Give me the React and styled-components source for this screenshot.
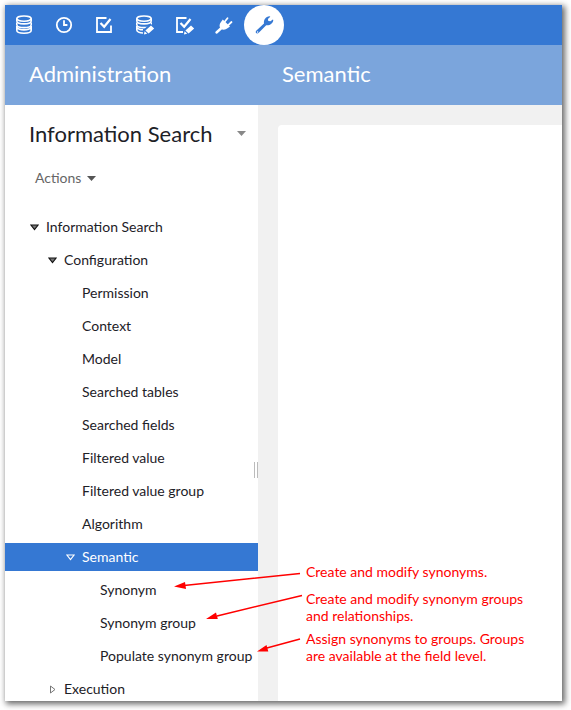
import React from "react";
import styled, { createGlobalStyle } from "styled-components";

const GlobalStyle = createGlobalStyle`
  * { box-sizing: border-box; }
  body { margin: 0; background: #fff; font-family: Lato, "Open Sans", sans-serif; color: #1d2127; }
  button { font: inherit; color: inherit; border: 0; background: none; padding: 0; cursor: pointer; }
`;

const Page = styled.div`
  height: 100vh;
  padding: 5px 9px 9px 5px;
`;

const Window = styled.div`
  position: relative;
  display: flex;
  flex-direction: column;
  height: 100%;
  background: #fff;
  box-shadow: 2px 2px 6px 1px rgba(0, 0, 0, 0.6);
`;

const Toolbar = styled.nav`
  display: flex;
  flex: none;
  gap: 10px;
  height: 40px;
  padding-left: 9px;
  background: #3578d3;
`;

const ToolButton = styled.button`
  display: flex;
  align-items: center;
  justify-content: center;
  width: ${(p) => (p.$active ? 40 : 20)}px;
  min-width: ${(p) => (p.$active ? 40 : 20)}px;
  height: 40px;
  border-radius: 50%;
  && {
    color: ${(p) => (p.$active ? "#3578d3" : "#fff")};
    background: ${(p) => (p.$active ? "#fff" : "transparent")};
  }
`;

const ToolGroup = styled.div`
  display: flex;
  gap: 20px;
`;

const Columns = styled.div`
  display: grid;
  grid-template-columns: 253px 1fr;
  flex: ${(p) => (p.$fill ? "1" : "none")};
  min-height: 0;
  overflow: hidden;
`;

const Banner = styled.h1`
  margin: 0;
  padding: 0 24px 2px;
  height: 60px;
  line-height: 58px;
  font-size: 22px;
  font-weight: 400;
  color: #fff;
  background: #7ba5dc;
`;

const Sidebar = styled.aside`
  position: relative;
  background: #fff;
`;

const SidebarHead = styled.div`
  display: flex;
  align-items: center;
  justify-content: space-between;
  height: 56px;
  padding: 0 12px 0 24px;
`;

const Title = styled.h2`
  margin: 0;
  font-size: 22px;
  font-weight: 400;
  white-space: nowrap;
`;

const MenuButton = styled.button`
  display: flex;
  align-items: center;
`;

const Actions = styled(MenuButton)`
  gap: 6px;
  height: 34px;
  margin: 0 0 18px 30px;
  font-size: 14px;
  line-height: 16px;
  && { color: #666; }
`;

const Tree = styled.ul`
  display: flex;
  flex-direction: column;
  gap: 5px;
  margin: 0;
  padding: 0;
  list-style: none;
`;

const TreeItem = styled.button`
  display: flex;
  align-items: center;
  width: 100%;
  height: 28px;
  && {
    padding: 0 0 2px ${(p) => 22 + p.$level * 18}px;
    color: ${(p) => (p.$selected ? "#fff" : "#1d2127")};
    background: ${(p) => (p.$selected ? "#3578d3" : "transparent")};
  }
  font-size: 14px;
  white-space: nowrap;
`;

const Marker = styled.span`
  display: flex;
  align-items: center;
  justify-content: center;
  width: 15px;
  padding-top: 2px;
  margin-right: 4px;
`;

const Splitter = styled.div`
  position: absolute;
  right: 0;
  top: 357px;
  width: 4px;
  height: 16px;
  border: solid #bbb;
  border-width: 0 1px;
`;

const Content = styled.main`
  padding: 20px 0 0 20px;
  background: #f1f1f1;
`;

const Card = styled.div`
  height: 100%;
  background: #fff;
  border-radius: 4px 0 0 0;
`;

const Arrows = styled.svg`
  position: absolute;
  left: 165px;
  top: 560px;
  pointer-events: none;
`;

const Note = styled.p`
  position: absolute;
  left: 301px;
  top: ${(p) => p.$top}px;
  margin: 0;
  font-size: 14px;
  line-height: 17px;
  white-space: pre;
  color: #f00;
`;

const DiskStack = ({ edit }) => (
  <>
    <ellipse cx="9" cy="3.6" rx="7.2" ry="2.6" />
    <path d="M1.8 3.6v2.5c0 1.6 3 2.8 7.2 2.8s7.2-1.2 7.2-2.8V3.6" />
    <path d="M1.8 7.4v2.4c0 1.6 3 2.8 7.2 2.8 4.2 0 7.2-1.2 7.2-2.8V7.4" />
    {edit ? (
      <path d="M1.8 11v4c0 1.6 2.7 3 6.2 3M2 12.6c.8 1.4 2.8 2.1 6 2.2" />
    ) : (
      <path d="M1.8 11v4.2c0 1.7 3 3 7.2 3s7.2-1.3 7.2-3V11M2 12.5c1 1.4 3.6 2.4 7 2.4s6-1 7-2.4" />
    )}
  </>
);

const Pencil = () => (
  <g stroke="none">
    <path d="M8 20l1.2-6 6.2-5.6 5 4.4-7 7z" fill="#3578d3" />
    <path d="M16 10.4l3.2 3-5.6 5.2-3.2-3zM9.6 16.3l2.6 2.5-3.3.7z" fill="currentColor" />
  </g>
);

const Glyph = ({ name }) => (
  <svg width="20" height="20" viewBox="-1 0 20 20" overflow="visible" fill="none" stroke="currentColor" strokeWidth="1.6" aria-hidden="true">
    {name === "data" && <DiskStack />}
    {name === "clock" && (
      <>
        <circle cx="9" cy="10" r="7.2" strokeWidth="1.8" />
        <path d="M9 5.2V10h3.4" strokeWidth="1.8" />
      </>
    )}
    {(name === "task" || name === "taskEdit") && (
      <>
        <path d={name === "task" ? "M11.5 3H2v14h14v-6.5" : "M11.5 3H2v14h6"} strokeWidth="1.8" />
        <path d="M5.5 8l3.7 3.8L15.5 4" strokeWidth="2.2" />
      </>
    )}
    {name === "dataEdit" && <DiskStack edit />}
    {(name === "dataEdit" || name === "taskEdit") && <Pencil />}
    {name === "plug" && (
      <g strokeLinecap="round">
        <path d="M1.500 17.500L7 12.500" strokeWidth="2.400" />
        <path d="M7.800 4.500L15 11.500 12.500 13.300C10.500 15 7.500 15.200 5.700 13.500S4.400 9 6 7z" fill="currentColor" stroke="none" />
        <path d="M9.500 7L12.500 3.300M13 10.300L16.500 7" strokeWidth="1.800" />
      </g>
    )}
    {name === "wrench" && (
      <path
        d="M1.2 15.7L9 8.4C8.400 5.300 10.500 1.400 14.700 1.200L15.300 1.800 12.900 4 13.300 6 15.500 6.300 17.800 4.400 18.300 5C18 8.500 14.700 10.800 11.200 10.300L3.500 18.100C1.800 19.300-.3 17.400 1.200 15.700zM2.100 16.400a.7.7 0 1 0 1 1 .7.7 0 0 0-1-1z"
        fill="currentColor"
        fillRule="evenodd"
        stroke="none"
      />
    )}
  </svg>
);

const Caret = ({ color }) => (
  <svg width="9" height="5" viewBox="0 0 9 5" aria-hidden="true">
    <path d="M0 0h9L4.500 5z" fill={color} />
  </svg>
);

const Twisty = ({ state, selected }) =>
  state === "closed" ? (
    <svg width="6" height="9" viewBox="0 0 6 9" aria-hidden="true">
      <path d="M.5 1v7l4.500-3.500z" fill="#fff" stroke="#777" />
    </svg>
  ) : (
    <svg width="9" height="7" viewBox="0 0 9 7" aria-hidden="true">
      <path d="M.9 1h7.200L4.500 5.500z" fill={selected ? "none" : "#777"} stroke={selected ? "#fff" : "#111"} strokeWidth="1.2" />
    </svg>
  );

const tools = [
  ["data", "Data"],
  ["clock", "History"],
  ["task", "Tasks"],
  ["dataEdit", "Data modeling"],
  ["taskEdit", "Workflow modeling"],
  ["plug", "Data services"],
];

const items = [
  ["Information Search", 0, "open"],
  ["Configuration", 1, "open"],
  ["Permission", 2],
  ["Context", 2],
  ["Model", 2],
  ["Searched tables", 2],
  ["Searched fields", 2],
  ["Filtered value", 2],
  ["Filtered value group", 2],
  ["Algorithm", 2],
  ["Semantic", 2, "open"],
  ["Synonym", 3],
  ["Synonym group", 3],
  ["Populate synonym group", 3],
  ["Execution", 1, "closed"],
];

const notes = [
  [558, "Create and modify synonyms."],
  [585, "Create and modify synonym groups\nand relationships."],
  [625, "Assign synonyms to groups. Groups\nare available at the field level."],
];

export default function App() {
  return (
    <Page>
      <GlobalStyle />
      <Window>
        <Toolbar>
          <ToolGroup>
            {tools.map(([name, label]) => (
              <ToolButton key={name} aria-label={label}>
                <Glyph name={name} />
              </ToolButton>
            ))}
          </ToolGroup>
          <ToolButton aria-label="Administration" $active>
            <Glyph name="wrench" />
          </ToolButton>
        </Toolbar>
        <Columns>
          <Banner>Administration</Banner>
          <Banner as="h2">Semantic</Banner>
        </Columns>
        <Columns $fill>
          <Sidebar>
            <SidebarHead>
              <Title>Information Search</Title>
              <MenuButton aria-label="Choose section">
                <Caret color="#888" />
              </MenuButton>
            </SidebarHead>
            <Actions>
              Actions <Caret color="#555" />
            </Actions>
            <Tree>
              {items.map(([label, level, state]) => {
                const selected = label === "Semantic";
                return (
                  <li key={label}>
                    <TreeItem $level={level} $selected={selected}>
                      <Marker>{state && <Twisty state={state} selected={selected} />}</Marker>
                      {label}
                    </TreeItem>
                  </li>
                );
              })}
            </Tree>
            <Splitter />
          </Sidebar>
          <Content>
            <Card />
          </Content>
        </Columns>
        <Arrows width="140" height="90" viewBox="170 565 140 90" stroke="#f00" fill="#f00" aria-hidden="true">
          <path d="M300 573.500L184 585.500M302 595.500L217 616M300 639L265 648.500" strokeWidth="1.500" />
          <path d="M174 586.500l11-4.500 1 7zM206 619l10-6.500 1.800 6.500zM257 651.500l9.500-6.500 1.800 6.500z" stroke="none" />
        </Arrows>
        {notes.map(([top, text]) => (
          <Note key={top} $top={top}>{text}</Note>
        ))}
      </Window>
    </Page>
  );
}
